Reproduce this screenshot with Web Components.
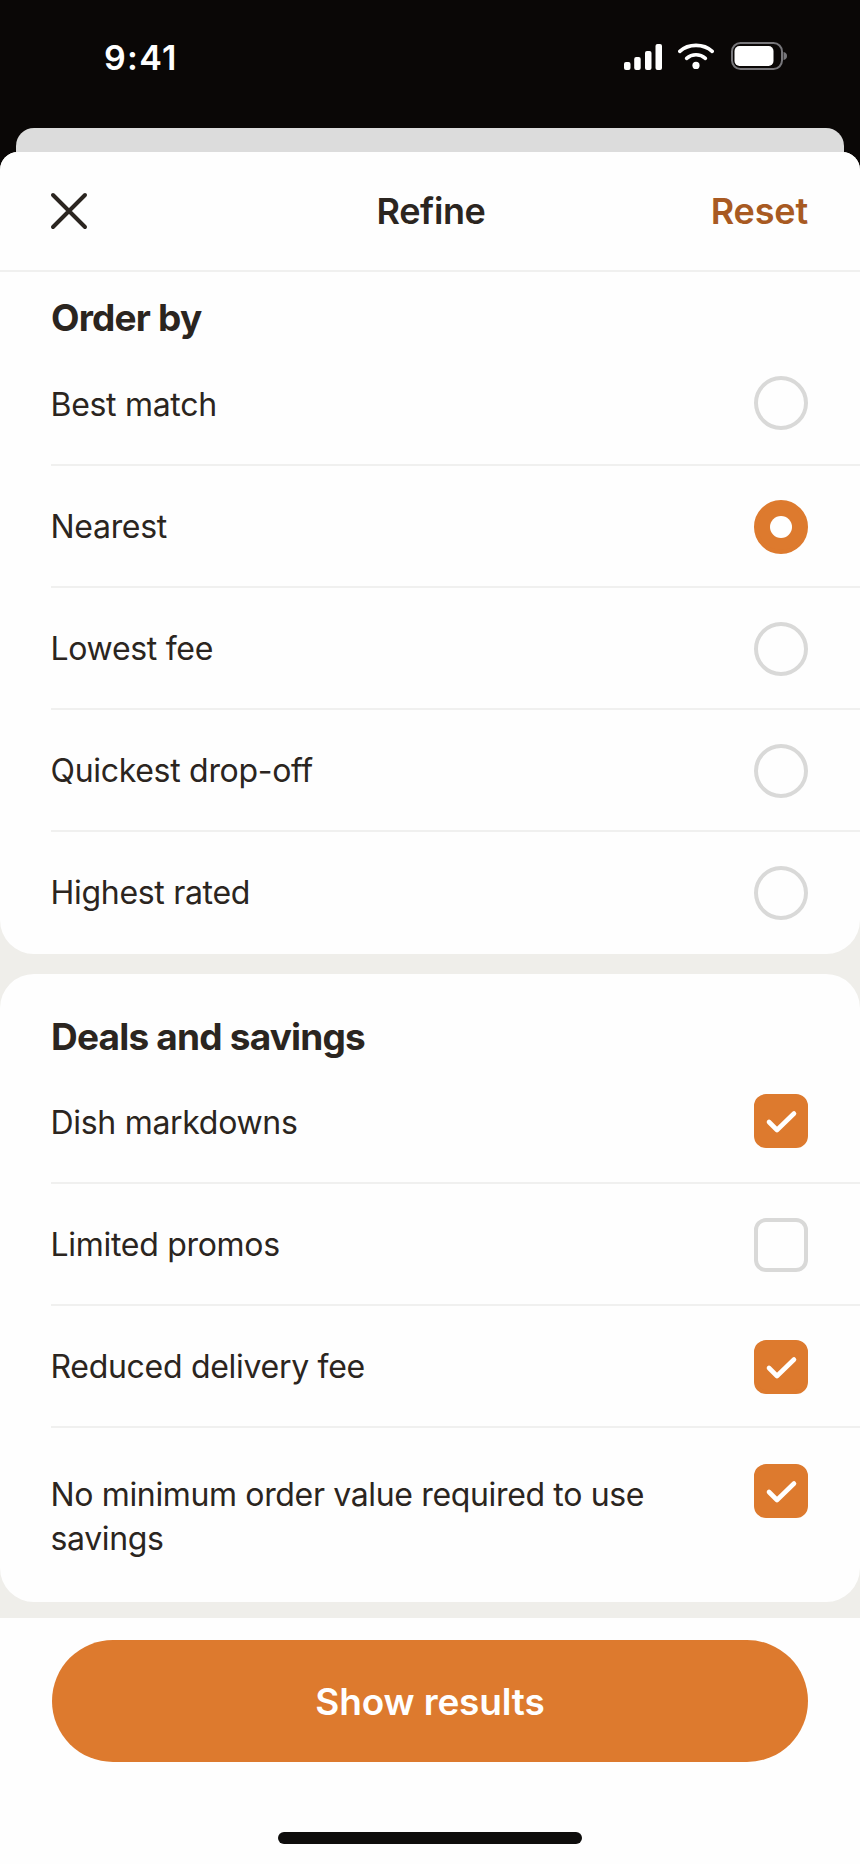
<!DOCTYPE html>
<html lang="en">
<head>
<meta charset="utf-8">
<title>Refine</title>
<style>
html,body{margin:0;padding:0;background:#0a0706}
body{font-family:Inter,"Liberation Sans",sans-serif;color:#2b2520;width:860px;height:1864px;overflow:hidden}
</style>
</head>
<body>
<app-screen>
  <status-bar slot="status"></status-bar>
  <sheet-header slot="header" title="Refine" action="Reset"></sheet-header>
  <filter-card first heading="Order by">
    <filter-row type="radio">Best match</filter-row>
    <filter-row type="radio" checked>Nearest</filter-row>
    <filter-row type="radio">Lowest fee</filter-row>
    <filter-row type="radio">Quickest drop-off</filter-row>
    <filter-row type="radio" last>Highest rated</filter-row>
  </filter-card>
  <filter-card heading="Deals and savings">
    <filter-row type="check" checked>Dish markdowns</filter-row>
    <filter-row type="check">Limited promos</filter-row>
    <filter-row type="check" checked>Reduced delivery fee</filter-row>
    <filter-row type="check" checked last multiline>No minimum order value required to use savings</filter-row>
  </filter-card>
  <action-footer slot="footer">Show results</action-footer>
</app-screen>
<script>
function define(name, css, html){
  customElements.define(name, class extends HTMLElement{
    constructor(){
      super();
      const root=this.attachShadow({mode:'open'});
      root.innerHTML='<style>'+css+'</style>'+(typeof html==='function'?html(this):html);
    }
  });
}

define('app-screen',`
  :host{display:block;width:860px;height:1864px;background:#0a0706;overflow:hidden}
  .back{height:48px;margin:0 16px -24px;background:#dcdcdc;border-radius:18px 18px 0 0}
  .sheet{position:relative;display:flex;flex-direction:column;height:1712px;background:#efeeea;border-radius:18px 18px 0 0;overflow:hidden}
  .scroll{display:flex;flex-direction:column;gap:20px;padding-bottom:16px}
`,`
  <slot name="status"></slot>
  <div class="back"></div>
  <div class="sheet">
    <slot name="header"></slot>
    <div class="scroll"><slot></slot></div>
    <slot name="footer"></slot>
  </div>
`);

define('status-bar',`
  :host{display:block;height:128px}
  .bar{display:flex;align-items:flex-start;justify-content:space-between;height:128px;box-sizing:border-box;padding:37px 73px 0 104px}
  .time{font:600 34px/42px Inter,"Liberation Sans",sans-serif;color:#fff;letter-spacing:1.3px}
  .icons{display:flex;align-items:flex-start;gap:16px;padding-top:5px}
  svg{display:block}
`,`
  <div class="bar">
    <span class="time">9:41</span>
    <div class="icons">
      <svg width="38" height="28" viewBox="0 0 38 28"><g fill="#fff">
        <rect x="0" y="20" width="6.5" height="8" rx="2"/>
        <rect x="10.2" y="15" width="6.5" height="13" rx="2"/>
        <rect x="21" y="9" width="6.5" height="19" rx="2"/>
        <rect x="31.5" y="2" width="6.5" height="26" rx="2"/>
      </g></svg>
      <svg width="36" height="28" viewBox="0 0 36 28"><g fill="none" stroke="#fff" stroke-width="3.6" stroke-linecap="round">
        <path d="M1.8 9.4C10.5 1.4 25.5 1.4 34.2 9.4"/>
        <path d="M8.6 16.4C14 11.6 22 11.6 27.4 16.4"/>
      </g><circle cx="18" cy="23.4" r="3.6" fill="#fff"/></svg>
      <svg width="56" height="28" viewBox="0 0 56 28" style="margin-left:1px">
        <rect x="1" y="1" width="50" height="26" rx="8.5" fill="none" stroke="#77767a" stroke-width="2"/>
        <rect x="3.5" y="4" width="39" height="20" rx="5" fill="#fff"/>
        <path d="M52.5 10C55 10.6 56 12 56 14C56 16 55 17.4 52.5 18Z" fill="#77767a"/>
      </svg>
    </div>
  </div>
`);

define('sheet-header',`
  :host{display:block;flex:none}
  .h{display:grid;grid-template-columns:1fr auto 1fr;align-items:center;height:118px;padding:0 52px 0 50px;background:#fefefe;border-bottom:2px solid #f0f0ef}
  .x{display:block;width:38px;height:38px}
  .t{margin-left:4px;font:600 36px/44px Inter,"Liberation Sans",sans-serif;color:#2b2520;letter-spacing:-.4px}
  .a{justify-self:end;font:600 36px/44px Inter,"Liberation Sans",sans-serif;color:#a85a22;letter-spacing:-.15px}
`,(el)=>`
  <div class="h">
    <svg class="x" viewBox="0 0 38 38" fill="none" stroke="#2b2520" stroke-width="4" stroke-linecap="round"><path d="M3 3L35 35M35 3L3 35"/></svg>
    <span class="t">${el.getAttribute('title')}</span>
    <span class="a">${el.getAttribute('action')}</span>
  </div>
`);

define('filter-card',`
  :host{display:block;background:#fefefe;border-radius:34px;padding:39px 0 0 51px}
  :host([first]){border-radius:0 0 34px 34px;padding-top:22px}
  h2{margin:0 0 1px;height:48px;font:700 37px/48px Inter,"Liberation Sans",sans-serif;color:#2b2520;letter-spacing:-.8px}
  :host([first]) h2{margin-bottom:2px}
  .rows{display:flex;flex-direction:column}
`,(el)=>`
  <h2>${el.getAttribute('heading')}</h2>
  <div class="rows"><slot></slot></div>
`);

define('filter-row',`
  :host{display:block;box-sizing:border-box;height:122px;border-bottom:2px solid #f0f0ef}
  :host([last]){border-bottom:0}
  :host([multiline]){height:174px}
  .r{display:flex;align-items:center;justify-content:space-between;gap:40px;height:100%;box-sizing:border-box;padding-right:52px}
  :host([multiline]) .r{align-items:flex-start;padding-top:36px}
  .l{font:400 32px/44px Inter,"Liberation Sans",sans-serif;color:#2b2520;letter-spacing:-.3px;margin-left:-.5px;margin-top:2px}
  :host([last]) .l{margin-top:0}
  :host([multiline]) .l{padding-top:9px;max-width:640px;letter-spacing:-.35px}
  .c{flex:none;box-sizing:border-box;width:54px;height:54px;border:4px solid #d9d9d8;border-radius:50%;display:flex;align-items:center;justify-content:center;margin-top:2px}
  :host(:first-child) .c{margin-top:0;margin-bottom:2px}
  :host([last]) .c{margin-top:0}
  .c.check{border-radius:12px}
  :host([checked]) .c{background:#dd7a2e;border-color:#dd7a2e}
  .dot{width:22px;height:22px;border-radius:50%;background:#fff}
  svg{display:block;flex:none}
`,(el)=>{
  const checked=el.hasAttribute('checked'), type=el.getAttribute('type');
  let inner='';
  if(checked&&type==='radio')inner='<span class="dot"></span>';
  if(checked&&type==='check')inner='<svg width="54" height="54" viewBox="0 0 54 54" style="margin:-4px"><path d="M15 28L23 36L40 19.5" fill="none" stroke="#fff" stroke-width="4.6" stroke-linecap="round" stroke-linejoin="round"/></svg>';
  return `<div class="r"><span class="l"><slot></slot></span><span class="c ${type}">${inner}</span></div>`;
});

define('action-footer',`
  :host{display:block;flex:1;background:#fefefe;box-sizing:border-box;padding:22px 52px 0}
  .b{display:flex;align-items:center;justify-content:center;box-sizing:border-box;height:122px;padding-top:2px;border-radius:61px;background:#dd7a2e;color:#fff;font:600 37px/44px Inter,"Liberation Sans",sans-serif;letter-spacing:-.15px}
  .home{width:304px;height:12px;border-radius:6px;background:#0e0d0c;margin:70px auto 0}
`,`
  <div class="b"><slot></slot></div>
  <div class="home"></div>
`);
</script>
</body>
</html>
